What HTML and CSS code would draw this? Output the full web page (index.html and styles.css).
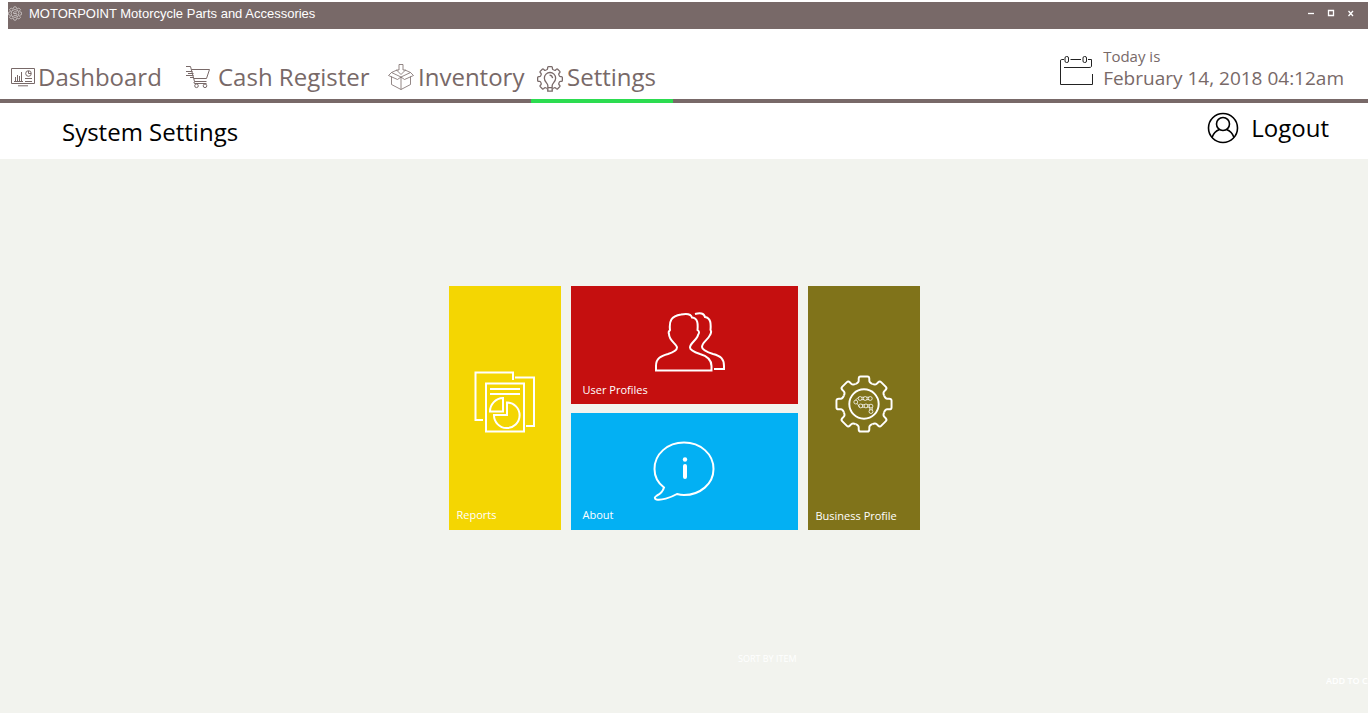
FILE: index.html
```html
<!DOCTYPE html>
<html lang="en">
<head>
<meta charset="utf-8">
<title>MOTORPOINT Motorcycle Parts and Accessories</title>
<link rel="stylesheet" href="styles.css">
</head>
<body>
<svg class="defs" width="0" height="0" aria-hidden="true">
  <defs>
    <path id="tooth" d="M-8.6-20.8Q-5.5-22-5.5-24V-26Q-5.5-28.5-3.5-28.5H3.5Q5.5-28.5 5.5-26V-24Q5.5-22 8.6-20.8"/>
    <g id="gear">
      <use href="#tooth"/><use href="#tooth" transform="rotate(45)"/><use href="#tooth" transform="rotate(90)"/><use href="#tooth" transform="rotate(135)"/>
      <use href="#tooth" transform="rotate(180)"/><use href="#tooth" transform="rotate(225)"/><use href="#tooth" transform="rotate(270)"/><use href="#tooth" transform="rotate(315)"/>
    </g>
    <g id="chain">
      <circle cx="-4" cy="-5.7" r="2"/><circle cx="1.3" cy="-5.7" r="2"/><circle cx="6.5" cy="-5.7" r="2"/><circle cx="-8.500" cy="-2" r="2"/>
      <circle cx="-3.4" cy="2" r="2"/><circle cx="2" cy="2" r="2"/><circle cx="7.2" cy="2.2" r="2"/><circle cx="7.2" cy="7.8" r="2"/>
      <path d="M-2.500-7H0M-2.500-4.500H0M2.700-7H5.200M2.700-4.500H5.200M-9-4L-5.500-7M-7-.500L-4.500 3.500M-2 .800H.800M-2 3.300H.800M3.400 .800H6M3.400 3.300H6M8.500 3.500V6.500M6 3.500V6.500"/>
    </g>
  </defs>
</svg>

<div class="titlebar">
  <svg class="app-icon" viewBox="-30 -30 60 60"><use href="#gear"/><circle r="17"/><path d="M8-7H-3Q-9-5-6 0H6Q10 3 7 8H-6"/></svg>
  <span class="app-name">MOTORPOINT Motorcycle Parts and Accessories</span>
  <div class="window-buttons">
    <button type="button" aria-label="Minimize"><svg viewBox="0 0 8 8"><path d="M1 4.500H7"/></svg></button>
    <button type="button" aria-label="Maximize"><svg viewBox="0 0 8 8"><path d="M1.500 1.500H6.500V6.500H1.500Z"/></svg></button>
    <button type="button" aria-label="Close"><svg viewBox="0 0 8 8"><path d="M1.500 2L6 7M6 2L1.500 7"/></svg></button>
  </div>
</div>

<header class="header">
  <nav class="nav">
    <a href="#dashboard" class="nav-link">
      <svg class="icon-dashboard" viewBox="0 0 24 24"><path d="M.5 3.5H23.5V18.5H.5ZM7 20.8H17M4.5 16V12M6.5 16V10M8.5 16V11M10.5 16V7M3 16.5H12M14 13.5H21M14 16.5H21"/><circle cx="17.5" cy="8.5" r="2.8"/><path d="M17.5 6V8.5H20"/></svg>
      <span>Dashboard</span>
    </a>
    <a href="#register" class="nav-link nav-register">
      <svg class="icon-cart" viewBox="0 0 26 24"><path d="M1 1.500H5.500L9.500 16.500H21.500M6.500 4.500H24.500L21.500 13.500H9M1 6.500H7.500M3 8.500H8.500M1 10.500H8.500M5 12.500H9M9.500 16.500Q8 18.500 10 18.500H21.500"/><circle cx="11.500" cy="20.800" r="1.800"/><circle cx="20" cy="20.800" r="1.800"/></svg>
      <span>Cash Register</span>
    </a>
    <a href="#inventory" class="nav-link">
      <svg class="icon-box" viewBox="0 0 26 26"><path d="M11 .5H15V6H17.5L13 10.5 8.500 6H11ZM3.500 12.500V20.500L13 25.500 22.500 20.500V12.500M13 13V25.500M13 13L3.500 8.500 .5 11.500 9.500 15.500 13 13 16.500 15.500 25.500 11.500 22.500 8.500ZM3.500 8.500L9 6M22.500 8.500L17 6"/></svg>
      <span>Inventory</span>
    </a>
    <a href="#settings" class="nav-link nav-active" aria-current="page">
      <svg class="icon-settings" viewBox="-30 -30 60 60"><use href="#gear"/><path class="bulb-gap" d="M-6 14H6V30H-6Z"/><path d="M-5 28V15C-5 10-13 7-13-2A13 13 0 0 1 13-2C13 7 5 10 5 15V28ZM-5 20H5M-1-9A8 8 0 0 1 6-2"/></svg>
      <span>Settings</span>
    </a>
  </nav>
  <div class="today">
    <svg class="icon-calendar" viewBox="0 0 34 32"><path d="M5 4.500H2.500Q1.500 4.500 1.500 6V29.500H33.500V19M11.500 4.500H22M29 4.500H32.500V11.500Q32 12.500 30 12.500H5"/><rect x="6" y="1.500" width="3.500" height="6" rx="1.500"/><rect x="24" y="1.500" width="3.500" height="6" rx="1.500"/></svg>
    <div>
      <div class="today-label">Today is</div>
      <time class="today-date" datetime="2018-02-14T04:12">February 14, 2018 04:12am</time>
    </div>
  </div>
</header>

<div class="subheader">
  <h1>System Settings</h1>
  <button type="button" class="logout">
    <svg viewBox="0 0 32 32"><circle cx="16" cy="16" r="14.500"/><circle cx="16" cy="12" r="6.500"/><path d="M5 25.500Q7 19.500 12.500 17.500M27 25.500Q25 19.500 19.500 17.500"/></svg>
    <span>Logout</span>
  </button>
</div>

<main class="main">
  <div class="tiles">
    <button type="button" class="tile reports">
      <svg viewBox="0 0 62 62"><path d="M9 49H1.500V1.500H39V9M41 6.500H60V55H52M12 12.500H50V60.500H12ZM16 18H46M16 23H46M29 27V40.500H16A13.500 13.500 0 0 1 29 27ZM33 31.500A12.800 12.800 0 1 1 20 44H33Z"/></svg>
      <span>Reports</span>
    </button>
    <button type="button" class="tile users">
      <svg viewBox="0 0 72 60"><path d="M2 58.500V54C2 46 7 44 14 42 20 40 23 38 23 35.500 23 32 15 29 15 22 14 19 15 20 16 18 15 9 17 4 27 2.500 34 1 37 2 38 5.500 44 6 44 12 43.500 18 45 19 46 20 44 23 43 28 36 31 36 35.500 36 38 40 40 46 42 53 44 57.500 47 57.500 54V58.500Z"/><path d="M41 2C46 .5 50 1 51 5 57 6 57 12 56.500 18 58 20 57 21 56 23 54 28 48 30 48 35 48 38 53 40 59 42 67 44 70 47 70 54V57H60"/></svg>
      <span>User Profiles</span>
    </button>
    <button type="button" class="tile about">
      <svg viewBox="0 0 62 60"><path d="M11 46.500C5 42 1.500 35 1.500 28 1.500 13 14.500 1.500 31 1.500S60.500 13 60.500 28 47 54 31 54Q27.500 54 24 53C17 57 8 59.500 3.500 58.500 1 57.500 1.500 56 4 54.500 7 53 10 50 11 46.500Z"/><path class="info-mark" d="M32 25V36"/><circle class="info-dot" cx="32" cy="18.500" r="2.200"/></svg>
      <span>About</span>
    </button>
    <button type="button" class="tile business">
      <svg viewBox="-30 -30 60 60"><use href="#gear"/><circle r="15.200"/><use href="#chain" class="chain"/></svg>
      <span>Business Profile</span>
    </button>
  </div>
  <div class="hint sort-hint">SORT BY ITEM</div>
  <div class="hint cart-hint">ADD TO CART</div>
</main>
</body>
</html>
```
FILE: styles.css
```css
* {
  box-sizing: border-box;
}

body {
  margin: 0;
  min-height: 100vh;
  padding: 2px 0 7px;
  display: flex;
  flex-direction: column;
  overflow-x: hidden;
  background: #fff;
  color: #000;
  font-family: "Open Sans", "Noto Sans", sans-serif;
}

svg {
  display: block;
  flex: none;
  fill: none;
  stroke: currentColor;
  stroke-width: 1;
}

.defs {
  position: absolute;
}

button {
  border: 0;
  padding: 0;
  background: none;
  color: inherit;
  font: inherit;
  cursor: pointer;
}

.titlebar {
  display: flex;
  align-items: flex-start;
  gap: 7px;
  height: 27px;
  margin-left: 8px;
  padding: 4px 13px 0 0;
  background: #786968;
  color: #fff;
}

.app-icon {
  width: 14px;
  height: 15px;
  stroke-width: 3;
  opacity: 0.8;
}

.app-name {
  font-family: "Liberation Sans", Arial, sans-serif;
  font-size: 13px;
  line-height: 15px;
}

.window-buttons {
  display: flex;
  gap: 12px;
  margin-left: auto;
  padding-top: 3px;
}

.window-buttons svg {
  width: 8px;
  height: 8px;
  stroke-width: 1.3;
}

.header {
  display: flex;
  justify-content: space-between;
  height: 74px;
  border-bottom: 4px solid #786968;
  color: #786968;
}

.nav {
  display: grid;
  grid-template-columns: 174px 203px 143px 142px;
  padding-left: 11px;
}

.nav-link {
  display: flex;
  align-items: center;
  gap: 4px;
  height: 74px;
  padding: 22px 0 0;
  color: inherit;
  font-size: 24px;
  line-height: 32px;
  text-decoration: none;
  white-space: nowrap;
}

.nav-link:first-child {
  gap: 3px;
}

.nav-register {
  gap: 7px;
}

.nav-active {
  padding: 26px 0 0 6px;
  border-bottom: 4px solid #2cdc50;
}

.icon-dashboard {
  width: 24px;
  height: 24px;
}

.icon-cart {
  width: 26px;
  height: 24px;
}

.icon-box {
  width: 26px;
  height: 26px;
  stroke-width: 0.8;
}

.icon-settings {
  width: 26px;
  height: 26px;
  margin-top: 4px;
  stroke-width: 3;
}

.bulb-gap {
  fill: #fff;
  stroke: none;
}

.today {
  display: flex;
  gap: 10px;
  padding: 17px 24px 0 0;
  white-space: nowrap;
}

.icon-calendar {
  width: 34px;
  height: 32px;
  margin-top: 9px;
  color: #222;
}

.today-label {
  font-size: 15px;
  line-height: 20px;
}

.today-date {
  display: block;
  font-size: 19px;
  line-height: 24px;
}

.subheader {
  display: flex;
  justify-content: space-between;
  align-items: flex-start;
  height: 56px;
  padding: 8px 39px 0 62px;
}

h1 {
  margin: 0;
  padding-top: 5px;
  font-size: 24px;
  line-height: 32px;
  font-weight: 400;
}

.logout {
  display: flex;
  align-items: center;
  gap: 12px;
  font-size: 24px;
  line-height: 32px;
}

.logout svg {
  width: 32px;
  height: 32px;
  margin-top: 1px;
  stroke-width: 1.6;
}

.main {
  flex: 1;
  padding-top: 127px;
  background: #f2f3ee;
}

.tiles {
  display: grid;
  grid-template-columns: 112px 227px 112px;
  grid-template-rows: 118px 117px;
  grid-template-areas:
    "reports users business"
    "reports about business";
  gap: 9px 10px;
  justify-content: center;
}

.tile {
  display: grid;
  grid-template-rows: 1fr auto;
  justify-items: center;
  align-items: center;
  padding: 12px 0 6px;
  color: #fff;
  font-size: 11px;
  line-height: 18px;
}

.tile span {
  justify-self: start;
  margin-left: 12px;
}

.tile svg {
  stroke-width: 2;
}

.reports {
  grid-area: reports;
  background: #f4d602;
}

.reports span,
.business span {
  margin-left: 8px;
}

.reports svg {
  width: 62px;
  height: 62px;
}

.users {
  grid-area: users;
  padding: 16px 0 5px;
  background: #c50f0f;
}

.users svg {
  width: 72px;
  height: 60px;
  margin-left: 12px;
}

.about {
  grid-area: about;
  padding-top: 22px;
  background: #03b0f3;
}

.about .info-mark {
  stroke-width: 4;
  stroke-linecap: round;
}

.about .info-dot {
  fill: currentColor;
  stroke: none;
}

.about svg {
  width: 62px;
  height: 60px;
}

.business {
  grid-area: business;
  padding: 14px 0 5px;
  background: #80731a;
}

.business svg {
  width: 58px;
  height: 58px;
}

.chain {
  stroke-width: 0.8;
}

.hint {
  color: #fff;
  font-size: 9px;
  line-height: 12px;
  white-space: nowrap;
}

.sort-hint {
  margin-top: 123px;
  padding-left: calc(50% + 54px);
}

.cart-hint {
  width: 42px;
  margin: 10px 0 0 auto;
  overflow: hidden;
  font-weight: 600;
}
```
